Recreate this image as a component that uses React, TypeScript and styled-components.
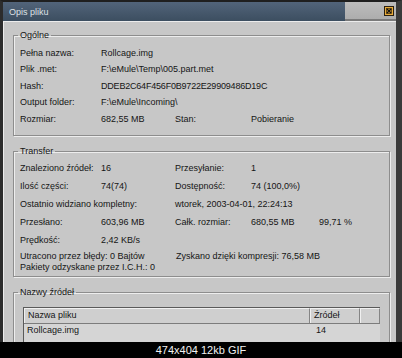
import React from "react";
import styled, { createGlobalStyle } from "styled-components";

const Global = createGlobalStyle`
  html, body { margin: 0; padding: 0; background: #000; }
  body { width: 402px; height: 358px; overflow: hidden; }
  * { box-sizing: border-box; }
`;

const Page = styled.div`
  width: 402px;
  height: 358px;
  display: flex;
  flex-direction: column;
  background: #000;
  font-family: "Liberation Sans", Arial, sans-serif;
`;

const Window = styled.div`
  height: 342px;
  display: flex;
  flex-direction: column;
  overflow: hidden;
  border-top: 2px solid #1f1f1f;
  border-left: 3px solid #2c2c2c;
  border-right: 6px solid #3a3a3a;
  background: #c7c7c7;
`;

const TitleBar = styled.div`
  height: 19px;
  display: flex;
  flex-shrink: 0;
`;

const TitleMain = styled.div`
  flex: 1;
  display: flex;
  align-items: center;
  padding-left: 6px;
  background: linear-gradient(#52647a, #3c4e60);
  color: #dde2e6;
  font-size: 9px;
`;

const TitleSide = styled.div`
  width: 51px;
  display: flex;
  align-items: center;
  justify-content: flex-end;
  padding-right: 2px;
  background: linear-gradient(#bdbdbd, #adadad);
  border-bottom: 2px solid #7a7a7a;
`;

const CloseButton = styled.div`
  width: 10px;
  height: 10px;
  display: flex;
`;

const Body = styled.div`
  flex: 1;
  border-top: 1px solid #ececec;
  border-left: 1px solid #ececec;
  padding: 7.5px 6px 0 9px;
  display: flex;
  flex-direction: column;
  color: #151515;
  font-size: 9px;
  line-height: 11px;
`;

const Group = styled.fieldset<{ $gap: number; $pt: number; $pb: number }>`
  margin: ${(p) => p.$gap}px 0 0 0;
  min-width: 0;
  padding: ${(p) => p.$pt}px 0 ${(p) => p.$pb}px 6px;
  border: 1px solid #8d8d8d;
  box-shadow: inset 1px 1px 0 #ededed, 1px 1px 0 #ededed;
`;

const Legend = styled.legend`
  padding: 0 2px;
  margin-left: -2px;
  font-size: 9px;
  line-height: 11px;
`;

const Grid = styled.div<{ $row: number }>`
  display: grid;
  grid-template-columns: 81px 74px 76px 68px 1fr;
  grid-auto-rows: ${(p) => p.$row}px;
  align-items: center;
  white-space: nowrap;
`;

const Cell = styled.div<{ $span?: number; $tight?: boolean }>`
  grid-column: span ${(p) => p.$span ?? 1};
  ${(p) => (p.$tight ? "letter-spacing: -0.2px;" : "")}
`;

const Notes = styled.div`
  margin-top: 2px;
  display: grid;
  grid-template-columns: 156px 1fr;
  grid-auto-rows: 11px;
  align-items: center;
  white-space: nowrap;
`;

const List = styled.div`
  margin: 0 9px 0 3px;
  height: 60px;
  border-top: 1px solid #5a5a5a;
  border-left: 1px solid #5a5a5a;
  background: #d5d5d5;
`;

const HeaderRow = styled.div`
  display: flex;
  height: 16px;
  border-bottom: 1px solid #7c7c7c;
`;

const HeaderCell = styled.div<{ $w?: number }>`
  ${(p) => (p.$w ? `width: ${p.$w}px;` : "flex: 1;")}
  display: flex;
  align-items: center;
  padding-left: 3px;
  background: #cfcfcf;
  border-top: 1px solid #f0f0f0;
  border-left: 1px solid #f0f0f0;
  border-right: 1px solid #858585;
`;

const DataRow = styled.div`
  display: flex;
  height: 14px;
  align-items: center;
`;

const DataCell = styled.div<{ $w?: number; $pl: number }>`
  ${(p) => (p.$w ? `width: ${p.$w}px;` : "flex: 1;")}
  padding-left: ${(p) => p.$pl}px;
`;

const Caption = styled.div`
  flex: 1;
  display: flex;
  align-items: center;
  justify-content: center;
  color: #f2f2f2;
  font-size: 11px;
  font-family: "Liberation Sans", Arial, sans-serif;
`;

export default function App() {
  return (
    <Page>
      <Global />
      <Window>
        <TitleBar>
          <TitleMain>Opis pliku</TitleMain>
          <TitleSide>
            <CloseButton>
              <svg width="10" height="10" viewBox="0 0 10 10">
                <rect x="0.5" y="0.5" width="9" height="9" fill="#e8ac3c" stroke="#2a2010" />
                <rect x="2.5" y="2.5" width="5" height="5" fill="none" stroke="#4a3510" strokeWidth="0.8" />
                <path d="M3 3 L7 7 M7 3 L3 7" stroke="#111" strokeWidth="1.4" />
              </svg>
            </CloseButton>
          </TitleSide>
        </TitleBar>
        <Body>
          <Group $gap={0} $pt={4.5} $pb={7.5}>
            <Legend>Ogólne</Legend>
            <Grid $row={16.5}>
              <Cell>Pełna nazwa:</Cell>
              <Cell $span={4}>Rollcage.img</Cell>
              <Cell>Plik .met:</Cell>
              <Cell $span={4}>F:\eMule\Temp\005.part.met</Cell>
              <Cell>Hash:</Cell>
              <Cell $span={4} $tight>DDEB2C64F456F0B9722E29909486D19C</Cell>
              <Cell>Output folder:</Cell>
              <Cell $span={4}>F:\eMule\Incoming\</Cell>
              <Cell>Rozmiar:</Cell>
              <Cell>682,55 MB</Cell>
              <Cell>Stan:</Cell>
              <Cell $span={2}>Pobieranie</Cell>
            </Grid>
          </Group>
          <Group $gap={9.5} $pt={2.5} $pb={2.5}>
            <Legend>Transfer</Legend>
            <Grid $row={18}>
              <Cell>Znaleziono źródeł:</Cell>
              <Cell>16</Cell>
              <Cell>Przesyłanie:</Cell>
              <Cell $span={2}>1</Cell>
              <Cell>Ilość części:</Cell>
              <Cell>74(74)</Cell>
              <Cell>Dostępność:</Cell>
              <Cell $span={2}>74 (100,0%)</Cell>
              <Cell $span={2}>Ostatnio widziano kompletny:</Cell>
              <Cell $span={3}>wtorek, 2003-04-01, 22:24:13</Cell>
              <Cell>Przesłano:</Cell>
              <Cell>603,96 MB</Cell>
              <Cell>Całk. rozmiar:</Cell>
              <Cell>680,55 MB</Cell>
              <Cell>99,71 %</Cell>
              <Cell>Prędkość:</Cell>
              <Cell $span={4}>2,42 KB/s</Cell>
            </Grid>
            <Notes>
              <Cell>Utracono przez błędy: 0 Bajtów</Cell>
              <Cell>Zyskano dzięki kompresji: 76,58 MB</Cell>
              <Cell $span={2}>Pakiety odzyskane przez I.C.H.: 0</Cell>
            </Notes>
          </Group>
          <Group $gap={10.5} $pt={8.5} $pb={4}>
            <Legend>Nazwy źródeł</Legend>
            <List>
              <HeaderRow>
                <HeaderCell $w={286}>Nazwa pliku</HeaderCell>
                <HeaderCell $w={50}>Źródeł</HeaderCell>
                <HeaderCell />
              </HeaderRow>
              <DataRow>
                <DataCell $w={286} $pl={3}>Rollcage.img</DataCell>
                <DataCell $w={50} $pl={6}>14</DataCell>
                <DataCell $pl={0} />
              </DataRow>
            </List>
          </Group>
        </Body>
      </Window>
      <Caption>474x404 12kb GIF</Caption>
    </Page>
  );
}
